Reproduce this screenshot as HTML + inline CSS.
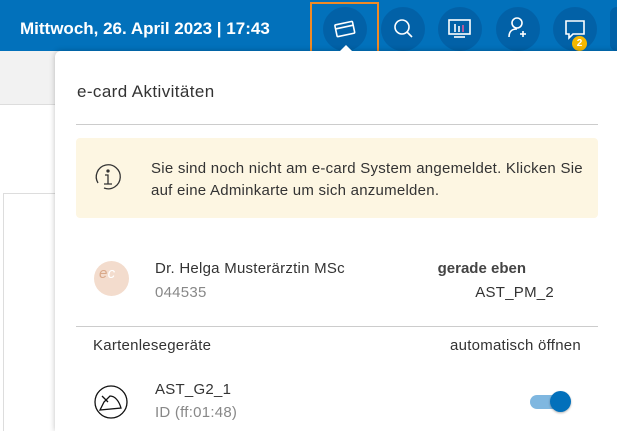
<!DOCTYPE html>
<html><head><meta charset="utf-8"><style>
*{margin:0;padding:0;box-sizing:border-box}
html,body{width:617px;height:431px;overflow:hidden}
body{position:relative;font-family:"Liberation Sans",sans-serif;background:#fff;color:#333}
.hdr{position:absolute;left:0;top:0;width:617px;height:51px;background:#0271bb}
.date{position:absolute;left:20px;top:19px;color:#fff;font-size:17px;font-weight:bold}
.c{position:absolute;top:7px;width:44px;height:44px;border-radius:50%;background:#0261a7}
.a{position:absolute}
.t{position:absolute;font-size:15px;letter-spacing:0.25px;white-space:nowrap}
.r{text-align:right}
</style></head><body>
<div class="hdr">
<div class="date">Mittwoch, 26. April 2023 | 17:43</div>
<div class="c" style="left:323px"></div>
<div class="c" style="left:381px"></div>
<div class="c" style="left:438px"></div>
<div class="c" style="left:496px"></div>
<div class="c" style="left:553px"></div>
<div class="c" style="left:610px;width:7px;border-radius:22px 0 0 22px"></div>
<svg class="a" style="left:0;top:0" width="617" height="51" fill="none" stroke="#fff" stroke-width="1.6">
<g transform="rotate(-12 345 30)"><rect x="336" y="23" width="18" height="12" rx="1"/><line x1="336" y1="27" x2="354" y2="27"/></g>
<circle cx="402" cy="27" r="7"/><line x1="407" y1="32" x2="412" y2="37"/>
<rect x="449" y="20" width="21" height="14"/><line x1="454" y1="37" x2="465" y2="37"/><line x1="455" y1="24" x2="455" y2="32"/><line x1="459" y1="26" x2="459" y2="32"/><line x1="463" y1="25" x2="463" y2="32" stroke="#e05a9a"/>
<circle cx="517" cy="23" r="5"/><path d="M509 37c0-6 3-8 8-8"/><line x1="520" y1="34" x2="526" y2="34"/><line x1="523" y1="31" x2="523" y2="37"/>
<path d="M566 21h18v13h-11l-4 4v-4h-3z"/>
</svg>
<div class="a" style="left:572px;top:36px;width:15px;height:15px;border-radius:50%;background:#f5b800;color:#fff;font-size:10px;font-weight:bold;text-align:center;line-height:15px">2</div>
<div class="a" style="left:310px;top:2px;width:69px;height:49px;border:2px solid #f08a24;border-bottom:0"></div>
</div>
<div class="a" style="left:310px;top:51px;width:69px;height:3px;border:2px solid #f08a24;border-top:0"></div>
<div class="a" style="left:0;top:51px;width:60px;height:54px;background:#f2f2f2;border-bottom:1px solid #ddd"></div>
<div class="a" style="left:3px;top:193px;width:60px;height:238px;border:1px solid #ddd;border-bottom:0"></div>
<div class="a" style="left:55px;top:51px;width:562px;height:380px;background:#fff;border-radius:6px 0 0 0;box-shadow:0 0 6px rgba(0,0,0,.25)"></div>
<svg class="a" style="left:339px;top:45px" width="14" height="7"><path d="M0 7L7 0L14 7z" fill="#fff"/></svg>
<div class="t" style="left:77px;top:82px;font-size:17px;letter-spacing:0.4px">e-card Aktivitäten</div>
<div class="a" style="left:76px;top:124px;width:522px;height:1px;background:#ccc"></div>
<div class="a" style="left:76px;top:138px;width:522px;height:80px;background:#fdf6e2;border-radius:4px"></div>
<svg class="a" style="left:92px;top:161px" width="32" height="32" fill="none" stroke="#333" stroke-width="1.3"><path d="M6 22A12 12 0 1 1 12 27"/><circle cx="16" cy="10" r="1" fill="#333"/><path d="M13 14h3v9M12 23h8"/></svg>
<div class="t" style="left:151px;top:158px;line-height:22px">Sie sind noch nicht am e-card System angemeldet. Klicken Sie<br>auf eine Adminkarte um sich anzumelden.</div>
<div class="a" style="left:94px;top:261px;width:35px;height:35px;border-radius:50%;background:#f3dccd"></div>
<div class="t" style="left:99px;top:265px;font-size:15px;color:#d9a98a;font-style:italic">e<span style="color:#fff">c</span></div>
<div class="t" style="left:155px;top:260px">Dr. Helga Musterärztin MSc</div>
<div class="t" style="left:155px;top:284px;color:#888">044535</div>
<div class="t r" style="left:400px;width:126px;top:260px;font-weight:bold;color:#444;letter-spacing:0">gerade eben</div>
<div class="t r" style="left:400px;width:154px;top:284px">AST_PM_2</div>
<div class="a" style="left:76px;top:326px;width:522px;height:1px;background:#ccc"></div>
<div class="t" style="left:93px;top:337px">Kartenlesegeräte</div>
<div class="t r" style="left:400px;width:181px;top:337px">automatisch öffnen</div>
<svg class="a" style="left:94px;top:385px" width="34" height="34" fill="none" stroke="#111" stroke-width="1.3"><circle cx="17" cy="17" r="16"/><path d="M6 25l4-8 6-6c5 0 9 5 11 12zM8 11l6 6"/></svg>
<div class="t" style="left:155px;top:381px">AST_G2_1</div>
<div class="t" style="left:155px;top:404px;color:#888">ID (ff:01:48)</div>
<div class="a" style="left:530px;top:395px;width:36px;height:14px;border-radius:7px;background:#7fb7e0"></div>
<div class="a" style="left:550px;top:391px;width:21px;height:21px;border-radius:50%;background:#0270bb;box-shadow:0 1px 2px rgba(0,0,0,.3)"></div>
</body></html>
